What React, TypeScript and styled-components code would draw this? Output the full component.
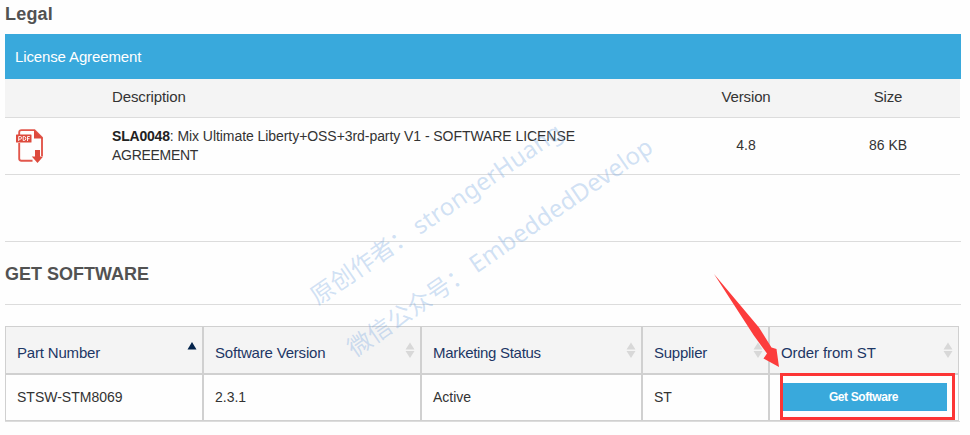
import React from "react";
import styled, { createGlobalStyle } from "styled-components";

const Global = createGlobalStyle`
  *, *::before, *::after { box-sizing: border-box; }
  body { margin: 0; background: #fefefe; font-family: "Liberation Sans", Arial, sans-serif; color: #333; }
`;

const Page = styled.main`
  position: relative;
  width: 970px;
  height: 435px;
  padding: 0 9px 0 5px;
  overflow: hidden;
  display: flow-root;
`;

const Title = styled.h2`
  margin: 0;
  font-size: 18px;
  line-height: 22px;
  font-weight: 700;
  color: #525252;
`;

const LegalTitle = styled(Title)`
  margin: 3px 0 9px;
  letter-spacing: 0.2px;
`;

const Banner = styled.div`
  height: 45px;
  padding-left: 10px;
  background: #39a9dc;
  color: #fff;
  font-size: 15px;
  line-height: 46px;
  letter-spacing: -0.13px;
`;

const LicenseRow = styled.div<{ $head?: boolean }>`
  display: grid;
  grid-template-columns: 107px 564px 140px 144px;
  align-items: center;
  width: 955px;
  height: ${(p) => (p.$head ? 39 : 57)}px;
  padding-bottom: ${(p) => (p.$head ? 3 : 1)}px;
  border-bottom: 1px solid #dcdcdc;
  background: ${(p) => (p.$head ? "#f4f4f4" : "transparent")};
  font-size: ${(p) => (p.$head ? 15 : 14)}px;
  letter-spacing: ${(p) => (p.$head ? -0.12 : 0)}px;
  line-height: 19px;
`;

const IconCell = styled.div`
  padding: 1px 0 0 11px;
  line-height: 0;
`;

const Description = styled.div`
  padding-top: 1px;
  white-space: nowrap;
`;

const Line = styled.div<{ $spacing: number }>`
  letter-spacing: ${(p) => p.$spacing}px;
`;

const Code = styled.strong`
  color: #222;
  letter-spacing: -0.2px;
`;

const Centered = styled.div`
  text-align: center;
`;

const SectionHead = styled.section`
  display: flex;
  align-items: center;
  height: 64px;
  margin: 66px 0 21px;
  padding-top: 1px;
  border: solid #dcdcdc;
  border-width: 1px 0;
`;

const Table = styled.div`
  width: 955px;
  border-bottom: 1px solid #dcdcdc;
`;

const Row = styled.div<{ $head?: boolean }>`
  display: grid;
  grid-template-columns: 198px 218px 221px 127px 189px;
  width: 954px;
  height: ${(p) => (p.$head ? 49 : 46)}px;
  border: 1px solid #d0d0d0;
  border-right: 0;
  border-top-width: ${(p) => (p.$head ? 1 : 0)}px;
  border-bottom-width: ${(p) => (p.$head ? 2 : 1)}px;
  background: ${(p) => (p.$head ? "#f4f4f4" : "transparent")};
`;

const Cell = styled.div<{ $head?: boolean; $spacing?: number }>`
  display: flex;
  justify-content: space-between;
  align-items: center;
  padding: ${(p) => (p.$head ? "4px 5px 0 11px" : "0 11px 2px")};
  border-right: 2px solid #d0d0d0;
  color: ${(p) => (p.$head ? "#1d3765" : "#333")};
  font-size: ${(p) => (p.$head ? 15 : 14)}px;
  letter-spacing: ${(p) => p.$spacing ?? 0}px;
  white-space: nowrap;
  &:last-child { border-right-width: 1px; }
`;

const Button = styled.button`
  flex: none;
  width: 164px;
  height: 28px;
  margin-left: 2px;
  padding: 1px 3px 0 0;
  border: 0;
  background: #39a9dc;
  color: #fff;
  font: 700 12px "Liberation Sans", Arial, sans-serif;
  letter-spacing: -0.4px;
`;

const SortIcon = styled.svg`
  display: block;
  flex: none;
  margin-top: -4px;
`;

const Watermark = styled.div<{ $x: number; $y: number }>`
  position: absolute;
  left: ${(p) => p.$x}px;
  top: ${(p) => p.$y}px;
  transform: rotate(-34.6deg);
  transform-origin: 0 100%;
  font-size: 24px;
  line-height: 24px;
  color: rgba(125, 170, 225, 0.36);
  white-space: nowrap;
  pointer-events: none;
`;

const Cjk = styled.span`
  margin-right: 4px;
  font-family: "Noto Sans CJK SC", sans-serif;
`;

const Latin = styled.span`
  font-family: "Noto Sans", sans-serif;
  font-weight: 400;
  letter-spacing: 0.2px;
`;

const Highlight = styled.div`
  position: absolute;
  left: 780px;
  top: 373px;
  width: 175px;
  height: 47px;
  border: 3px solid #fc3535;
`;

const Arrow = styled.svg`
  position: absolute;
  left: 710px;
  top: 270px;
`;

function PdfIcon() {
  return (
    <svg width="28" height="35" viewBox="0 0 28 35">
      <path d="M3.200 6.500V3.500Q3.200 1.100 5.600 1.100H18.500L26 8.600V27M3.200 14V29.500Q3.200 31.700 5.400 31.700H16.500" fill="none" stroke="#e2574c" strokeWidth="1.900" />
      <path d="M18 1L26.800 9.400H18Z" fill="#de4a3d" />
      <rect x="0" y="5.500" width="15.500" height="8" rx="0.600" fill="#dd4a3d" />
      <path d="M2.700 12V7.500h1.500q1.400 0 1.400 1.300t-1.400 1.400H2.700M7.200 7.500v4h1q1.600 0 1.600-2T8.200 7.500H7.200M11.500 12V7.500h2.300M11.500 9.700h2" fill="none" stroke="#fff" strokeWidth="0.900" />
      <path d="M19 21h5v6.500h3.200L21.500 34l-5.700-6.500H19Z" fill="#dd4a3d" />
    </svg>
  );
}

function Sort({ ascending }: { ascending?: boolean }) {
  return (
    <SortIcon width="10" height="17" viewBox="0 0 10 17">
      {ascending ? (
        <path d="M5 0L9.500 7.500H0.500Z" fill="#03234b" />
      ) : (
        <path d="M5 0.500L9.500 7.500H0.500ZM0.500 9H9.500L5 16Z" fill="#d8d8d8" />
      )}
    </SortIcon>
  );
}

const columns = [
  { name: "Part Number", spacing: -0.18 },
  { name: "Software Version", spacing: -0.19 },
  { name: "Marketing Status", spacing: -0.3 },
  { name: "Supplier", spacing: -0.25 },
  { name: "Order from ST", spacing: -0.08 },
];
const values = ["STSW-STM8069", "2.3.1", "Active", "ST"];

export default function App() {
  return (
    <Page>
      <Global />
      <LegalTitle>Legal</LegalTitle>
      <Banner>License Agreement</Banner>
      <LicenseRow $head>
        <span />
        <span>Description</span>
        <Centered>Version</Centered>
        <Centered>Size</Centered>
      </LicenseRow>
      <LicenseRow>
        <IconCell><PdfIcon /></IconCell>
        <Description>
          <Line $spacing={-0.06}><Code>SLA0048</Code>: Mix Ultimate Liberty+OSS+3rd-party V1 - SOFTWARE LICENSE</Line>
          <Line $spacing={-0.3}>AGREEMENT</Line>
        </Description>
        <Centered>4.8</Centered>
        <Centered>86 KB</Centered>
      </LicenseRow>
      <SectionHead><Title>GET SOFTWARE</Title></SectionHead>
      <Table>
        <Row $head>
          {columns.map(({ name, spacing }, i) => (
            <Cell $head $spacing={spacing} key={name}>{name}<Sort ascending={i === 0} /></Cell>
          ))}
        </Row>
        <Row>
          {values.map((value) => <Cell key={value}>{value}</Cell>)}
          <Cell><Button>Get Software</Button></Cell>
        </Row>
      </Table>
      <Watermark $x={320} $y={283}><Cjk>原创作者：</Cjk><Latin>strongerHuang</Latin></Watermark>
      <Watermark $x={357} $y={335}><Cjk>微信公众号：</Cjk><Latin>EmbeddedDevelop</Latin></Watermark>
      <Highlight />
      <Arrow width="75" height="100" viewBox="0 0 75 100">
        <path d="M4 4L49 57.500L61.500 77.500L66.500 79L69 97L53.500 88.500L57 83.500L43.500 65Z" fill="#fc3c3c" />
      </Arrow>
    </Page>
  );
}
